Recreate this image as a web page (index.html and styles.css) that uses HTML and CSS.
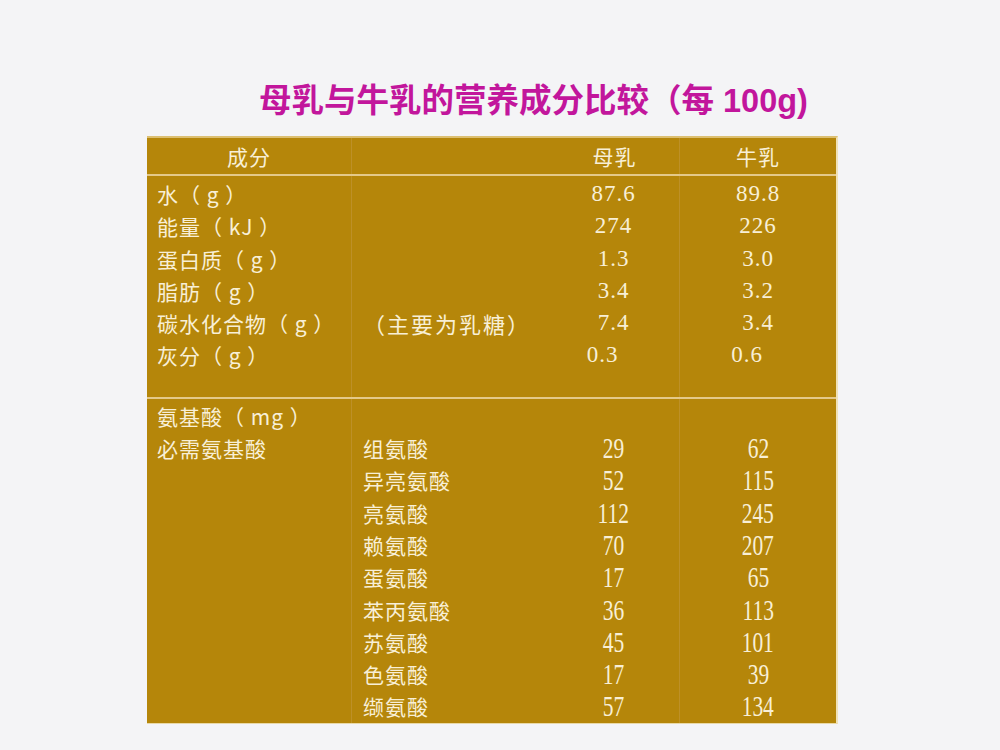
FILE: index.html
```html
<!DOCTYPE html>
<html lang="zh">
<head>
<meta charset="utf-8">
<title>母乳与牛乳的营养成分比较</title>
<link rel="stylesheet" href="styles.css">
</head>
<body>
<div class="slide">
  <h1 class="title">母乳与牛乳的营养成分比较（每 100g)</h1>
  <div class="table">
    <div class="row head">
      <div class="c c1">成分</div>
      <div class="c c2"></div>
      <div class="c c3">母乳</div>
      <div class="c c4">牛乳</div>
    </div>
    <div class="row sec1">
      <div class="c c1">
        <div class="ln">水（ g ）</div>
        <div class="ln">能量（ kJ ）</div>
        <div class="ln">蛋白质（ g ）</div>
        <div class="ln">脂肪（ g ）</div>
        <div class="ln">碳水化合物（ g ）</div>
        <div class="ln">灰分（ g ）</div>
      </div>
      <div class="c c2">
        <div class="ln"></div>
        <div class="ln"></div>
        <div class="ln"></div>
        <div class="ln"></div>
        <div class="ln note">（主要为乳糖）</div>
        <div class="ln"></div>
      </div>
      <div class="c c3 num">
        <div class="ln">87.6</div>
        <div class="ln">274</div>
        <div class="ln">1.3</div>
        <div class="ln">3.4</div>
        <div class="ln">7.4</div>
        <div class="ln shift">0.3</div>
      </div>
      <div class="c c4 num">
        <div class="ln">89.8</div>
        <div class="ln">226</div>
        <div class="ln">3.0</div>
        <div class="ln">3.2</div>
        <div class="ln">3.4</div>
        <div class="ln shift">0.6</div>
      </div>
    </div>
    <div class="row sec2">
      <div class="c c1">
        <div class="ln">氨基酸（ mg ）</div>
        <div class="ln">必需氨基酸</div>
      </div>
      <div class="c c2">
        <div class="ln"></div>
        <div class="ln">组氨酸</div>
        <div class="ln">异亮氨酸</div>
        <div class="ln">亮氨酸</div>
        <div class="ln">赖氨酸</div>
        <div class="ln">蛋氨酸</div>
        <div class="ln">苯丙氨酸</div>
        <div class="ln">苏氨酸</div>
        <div class="ln">色氨酸</div>
        <div class="ln">缬氨酸</div>
      </div>
      <div class="c c3 tall">
        <div class="ln"></div>
        <div class="ln"><span>29</span></div>
        <div class="ln"><span>52</span></div>
        <div class="ln"><span>112</span></div>
        <div class="ln"><span>70</span></div>
        <div class="ln"><span>17</span></div>
        <div class="ln"><span>36</span></div>
        <div class="ln"><span>45</span></div>
        <div class="ln"><span>17</span></div>
        <div class="ln"><span>57</span></div>
      </div>
      <div class="c c4 tall">
        <div class="ln"></div>
        <div class="ln"><span>62</span></div>
        <div class="ln"><span>115</span></div>
        <div class="ln"><span>245</span></div>
        <div class="ln"><span>207</span></div>
        <div class="ln"><span>65</span></div>
        <div class="ln"><span>113</span></div>
        <div class="ln"><span>101</span></div>
        <div class="ln"><span>39</span></div>
        <div class="ln"><span>134</span></div>
      </div>
    </div>
  </div>
</div>
</body>
</html>
```
FILE: styles.css
```css
html, body {
  margin: 0;
  padding: 0;
}
body {
  background: #f4f4f6;
  width: 1000px;
  height: 750px;
  overflow: hidden;
  font-family: "Noto Sans CJK SC", "Liberation Sans", sans-serif;
}
.slide {
  padding-top: 82px;
}
.title {
  margin: 0 0 0 259px;
  font-family: "Liberation Sans", "Noto Sans CJK SC", sans-serif;
  font-weight: bold;
  font-size: 32.5px;
  line-height: 38px;
  height: 54px;
  color: #c2169c;
  white-space: nowrap;
}
.table {
  margin-left: 147px;
  width: 691px;
  background: #b5860a;
  color: #f8efd6;
  border-top: 2px solid #dcbf72;
  border-right: 2px solid #f0e2b8;
  border-bottom: 1px solid #e9d9a8;
  box-sizing: border-box;
}
.row {
  display: grid;
  grid-template-columns: 205px 196px 132px 156px;
}
.c {
  font-size: 21px;
  letter-spacing: 1px;
}
.c1 {
  padding-left: 10px;
  border-right: 1px solid #bd9027;
}
.c2 {
  padding-left: 11px;
}
.c3 {
  border-right: 1px solid #bd9027;
  text-align: center;
}
.c4 {
  text-align: center;
}
.head {
  height: 36px;
  border-bottom: 2px solid #e4c98a;
}
.head .c {
  line-height: 36px;
}
.head .c1 {
  text-align: center;
  padding-left: 0;
}
.head .c3 {
  padding-left: 2px;
}
.ln {
  height: 32.3px;
  line-height: 32.3px;
  white-space: nowrap;
}
.sec1 .c {
  padding-top: 2px;
  padding-bottom: 25px;
}
.sec1 {
  border-bottom: 2px solid #e4c98a;
}
.sec2 .c {
  padding-top: 1px;
}
.note {
  font-size: 22px;
  letter-spacing: 2px;
}
.num {
  font-family: "Liberation Serif", serif;
  font-size: 23px;
  letter-spacing: 1px;
}
.num .shift {
  padding-right: 22px;
}
.tall {
  font-family: "Liberation Serif", serif;
  font-size: 29px;
  letter-spacing: 0;
}
.tall span {
  display: inline-block;
  transform: scaleX(0.74);
}
```
